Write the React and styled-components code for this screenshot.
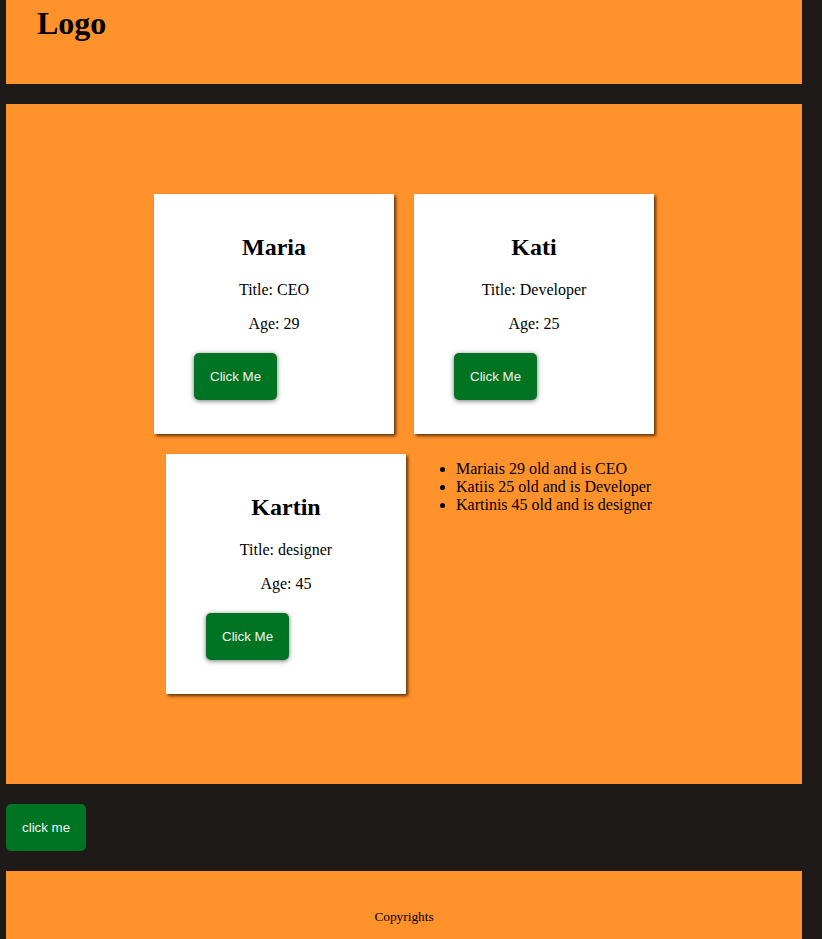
import React from "react";
import styled, { createGlobalStyle } from "styled-components";

const people = [
    { name: "Maria", title: "CEO", age: 29 },
    { name: "Kati", title: "Developer", age: 25 },
    { name: "Kartin", title: "designer", age: 45 },
];

export default function App() {
    return (
        <>
            <GlobalStyle />
            <Page>
                <Header>
                    <LogoText>Logo</LogoText>
                </Header>

                <Main>
                    {people.map((person) => (
                        <Card key={person.name}>
                            <Name>{person.name}</Name>
                            <Info>Title: {person.title}</Info>
                            <Info>Age: {person.age}</Info>
                            <CardButton>Click Me</CardButton>
                        </Card>
                    ))}
                    <Summary>
                        {people.map((person) => (
                            <li key={person.name}>
                                {person.name}is {person.age} old and is {person.title}
                            </li>
                        ))}
                    </Summary>
                </Main>

                <PlainButton>click me</PlainButton>

                <Footer>
                    <Copy>Copyrights</Copy>
                </Footer>
            </Page>
        </>
    );
}

const GlobalStyle = createGlobalStyle`
    body {
        margin: 0;
        background-color: #1e1a18;
        font-family: "Liberation Serif", "Times New Roman", serif;
        color: #000;
    }
`;

const Page = styled.div`
    width: 796px;
    margin-left: 6px;
`;

const Header = styled.header`
    height: 84px;
    box-sizing: border-box;
    padding: 5px 31px;
    background-color: #ff922b;
`;

const LogoText = styled.h1`
    margin: 0;
    font-size: 32px;
    font-weight: bold;
`;

const Main = styled.main`
    margin-top: 20px;
    height: 680px;
    box-sizing: border-box;
    padding: 80px 138px;
    background-color: #ff922b;
    display: flex;
    flex-wrap: wrap;
    justify-content: center;
    align-content: flex-start;
`;

const Card = styled.div`
    width: 240px;
    height: 240px;
    box-sizing: border-box;
    margin: 10px;
    padding: 20px;
    background-color: #fff;
    text-align: center;
    box-shadow: 2px 2px 3px rgba(60, 25, 0, 0.8);
`;

const Name = styled.h2`
    margin: 20px 0;
    font-size: 24px;
`;

const Info = styled.p`
    margin: 16px 0;
    font-size: 16px;
`;

const CardButton = styled.button`
    display: block;
    margin: 20px 0 0 20px;
    padding: 16px;
    border: none;
    border-radius: 5px;
    background-color: #007422;
    color: #f2f2f2;
    font-family: "Liberation Sans", Arial, sans-serif;
    font-size: 13.33px;
    box-shadow: 0 1px 5px rgba(0, 0, 0, 0.55);
`;

const Summary = styled.ul`
    margin: 16px 0;
    padding-left: 40px;
    font-size: 16px;
`;

const PlainButton = styled.button`
    display: block;
    margin: 20px 0;
    padding: 16px;
    border: none;
    border-radius: 5px;
    background-color: #007422;
    color: #f2f2f2;
    font-family: "Liberation Sans", Arial, sans-serif;
    font-size: 13.33px;
`;

const Footer = styled.footer`
    padding: 25px 0;
    background-color: #ff922b;
    text-align: center;
`;

const Copy = styled.p`
    margin: 13px 0;
    font-size: 13.33px;
`;
